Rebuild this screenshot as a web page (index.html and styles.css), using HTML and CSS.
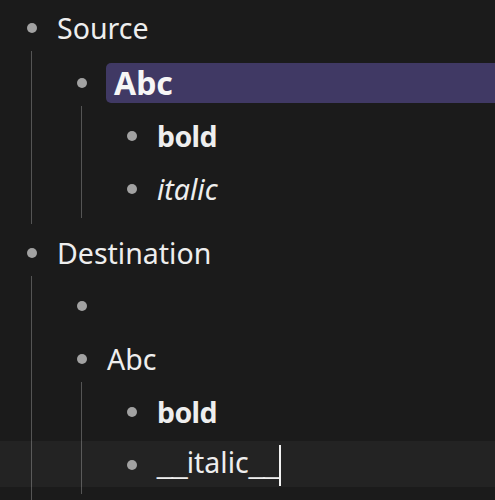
FILE: index.html
```html
<!DOCTYPE html>
<html lang="en">
  <head>
    <meta charset="UTF-8" />
    <meta name="viewport" content="width=device-width, initial-scale=1.0" />
    <title>Outline</title>
    <link rel="stylesheet" href="styles.css">
  </head>
  <body>
    <div class="page">
      <!-- Source group -->
      <div class="block top">
        <div class="row">
          <span class="bullet-wrap"><span class="bullet"></span></span>
          <div class="content">Source</div>
        </div>
        <div class="children">
          <div class="block">
            <div class="row selected">
              <span class="bullet-wrap"><span class="bullet"></span></span>
              <div class="content"><strong class="heading">Abc</strong></div>
            </div>
            <div class="children">
              <div class="block">
                <div class="row">
                  <span class="bullet-wrap"><span class="bullet"></span></span>
                  <div class="content"><strong>bold</strong></div>
                </div>
              </div>
              <div class="block">
                <div class="row">
                  <span class="bullet-wrap"><span class="bullet"></span></span>
                  <div class="content"><em>italic</em></div>
                </div>
              </div>
            </div>
          </div>
        </div>
      </div>

      <!-- Destination group -->
      <div class="block top">
        <div class="row">
          <span class="bullet-wrap"><span class="bullet"></span></span>
          <div class="content">Destination</div>
        </div>
        <div class="children">
          <div class="block">
            <div class="row">
              <span class="bullet-wrap"><span class="bullet"></span></span>
              <div class="content"></div>
            </div>
          </div>
          <div class="block">
            <div class="row">
              <span class="bullet-wrap"><span class="bullet"></span></span>
              <div class="content">Abc</div>
            </div>
            <div class="children">
              <div class="block">
                <div class="row">
                  <span class="bullet-wrap"><span class="bullet"></span></span>
                  <div class="content"><strong>bold</strong></div>
                </div>
              </div>
              <div class="block">
                <div class="row editing">
                  <span class="bullet-wrap"><span class="bullet"></span></span>
                  <div class="content"><span class="mark">__</span>italic<span class="mark">__</span><span class="caret"></span></div>
                </div>
              </div>
            </div>
          </div>
        </div>
      </div>
    </div>
  </body>
</html>
```
FILE: styles.css
```css
body {
  margin: 0;
  padding-top: 1px;
  overflow: hidden;
  background: #1b1b1b;
  color: #eeeeee;
  font-family: "Noto Sans", sans-serif;
  font-size: 28.5px;
}

.page {
  padding-left: 17px;
}

.top {
  margin-bottom: 2px;
}

.row {
  display: flex;
  align-items: center;
  height: 53px;
}

.bullet-wrap {
  flex: none;
  width: 30px;
  display: flex;
  justify-content: center;
  align-items: center;
}

.bullet {
  width: 10px;
  height: 10px;
  border-radius: 50%;
  background: #a2a2a2;
}

.content {
  margin-left: 10px;
  white-space: nowrap;
}

/* nested blocks with the thin guide line on the left */
.children {
  margin-left: 14px;
  margin-top: -3px;
  padding: 3px 0 3px 35px;
  border-left: 1px solid #555555;
}

.top > .children {
  padding-bottom: 6px;
}

.row.selected {
  margin-top: 2px;
}

/* selected block runs on past the right edge of the window */
.row.selected .content {
  flex: 1;
  height: 40px;
  margin-left: 9px;
  padding-left: 8px;
  display: flex;
  align-items: center;
  background: #403964;
  border-radius: 5px 0 0 5px;
}

.heading {
  font-size: 32px;
  font-weight: 700;
  color: #f6f6f6;
}

strong {
  font-weight: 700;
  letter-spacing: -0.6px;
}

.heading {
  letter-spacing: 0;
}

/* block being edited: faint band across the whole width */
.row.editing {
  background: rgba(255, 255, 255, 0.035);
  box-shadow: 0 0 0 100vmax rgba(255, 255, 255, 0.035);
  clip-path: inset(3px -100vmax 4px);
}

.mark {
  font-family: "Liberation Sans", sans-serif;
  letter-spacing: -1px;
}

.caret {
  display: inline-block;
  width: 2px;
  height: 41px;
  margin-left: 1px;
  vertical-align: middle;
  background: #f2f2f2;
}
```
